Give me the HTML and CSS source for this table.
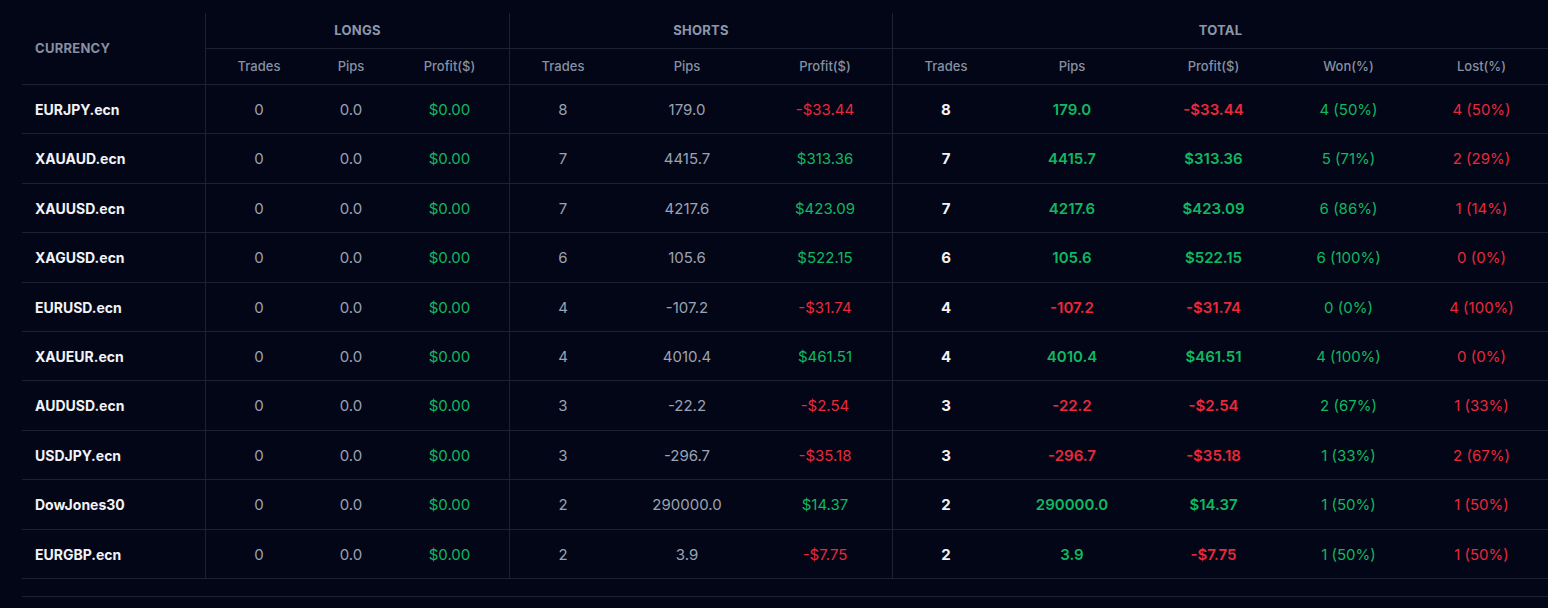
FILE: index.html
```html
<!DOCTYPE html>
<html lang="en">
<head>
<meta charset="utf-8">
<title>Currency statistics</title>
<link rel="stylesheet" href="styles.css">
</head>
<body>
<div class="wrap">
  <table class="stats">
    <colgroup>
      <col class="c-cur">
      <col class="c-106"><col class="c-78"><col class="c-120">
      <col class="c-106"><col class="c-142"><col class="c-135">
      <col class="c-106"><col class="c-146"><col class="c-137"><col class="c-133"><col class="c-133">
    </colgroup>
    <thead>
      <tr class="h1">
        <th rowspan="2" class="cur-h sep">CURRENCY</th>
        <th colspan="3" class="grp sep">LONGS</th>
        <th colspan="3" class="grp sep">SHORTS</th>
        <th colspan="5" class="grp">TOTAL</th>
      </tr>
      <tr class="h2">
        <th>Trades</th><th>Pips</th><th class="sep">Profit($)</th>
        <th>Trades</th><th>Pips</th><th class="sep">Profit($)</th>
        <th>Trades</th><th>Pips</th><th>Profit($)</th><th>Won(%)</th><th>Lost(%)</th>
      </tr>
    </thead>
    <tbody>
      <tr>
        <td class="cur sep">EURJPY.ecn</td>
        <td>0</td><td>0.0</td><td class="pos sep">$0.00</td>
        <td>8</td><td>179.0</td><td class="neg sep">-$33.44</td>
        <td class="tt">8</td><td class="pos b">179.0</td><td class="neg b">-$33.44</td><td class="pos">4 (50%)</td><td class="neg">4 (50%)</td>
      </tr>
      <tr>
        <td class="cur sep">XAUAUD.ecn</td>
        <td>0</td><td>0.0</td><td class="pos sep">$0.00</td>
        <td>7</td><td>4415.7</td><td class="pos sep">$313.36</td>
        <td class="tt">7</td><td class="pos b">4415.7</td><td class="pos b">$313.36</td><td class="pos">5 (71%)</td><td class="neg">2 (29%)</td>
      </tr>
      <tr>
        <td class="cur sep">XAUUSD.ecn</td>
        <td>0</td><td>0.0</td><td class="pos sep">$0.00</td>
        <td>7</td><td>4217.6</td><td class="pos sep">$423.09</td>
        <td class="tt">7</td><td class="pos b">4217.6</td><td class="pos b">$423.09</td><td class="pos">6 (86%)</td><td class="neg">1 (14%)</td>
      </tr>
      <tr>
        <td class="cur sep">XAGUSD.ecn</td>
        <td>0</td><td>0.0</td><td class="pos sep">$0.00</td>
        <td>6</td><td>105.6</td><td class="pos sep">$522.15</td>
        <td class="tt">6</td><td class="pos b">105.6</td><td class="pos b">$522.15</td><td class="pos">6 (100%)</td><td class="neg">0 (0%)</td>
      </tr>
      <tr>
        <td class="cur sep">EURUSD.ecn</td>
        <td>0</td><td>0.0</td><td class="pos sep">$0.00</td>
        <td>4</td><td>-107.2</td><td class="neg sep">-$31.74</td>
        <td class="tt">4</td><td class="neg b">-107.2</td><td class="neg b">-$31.74</td><td class="pos">0 (0%)</td><td class="neg">4 (100%)</td>
      </tr>
      <tr>
        <td class="cur sep">XAUEUR.ecn</td>
        <td>0</td><td>0.0</td><td class="pos sep">$0.00</td>
        <td>4</td><td>4010.4</td><td class="pos sep">$461.51</td>
        <td class="tt">4</td><td class="pos b">4010.4</td><td class="pos b">$461.51</td><td class="pos">4 (100%)</td><td class="neg">0 (0%)</td>
      </tr>
      <tr>
        <td class="cur sep">AUDUSD.ecn</td>
        <td>0</td><td>0.0</td><td class="pos sep">$0.00</td>
        <td>3</td><td>-22.2</td><td class="neg sep">-$2.54</td>
        <td class="tt">3</td><td class="neg b">-22.2</td><td class="neg b">-$2.54</td><td class="pos">2 (67%)</td><td class="neg">1 (33%)</td>
      </tr>
      <tr>
        <td class="cur sep">USDJPY.ecn</td>
        <td>0</td><td>0.0</td><td class="pos sep">$0.00</td>
        <td>3</td><td>-296.7</td><td class="neg sep">-$35.18</td>
        <td class="tt">3</td><td class="neg b">-296.7</td><td class="neg b">-$35.18</td><td class="pos">1 (33%)</td><td class="neg">2 (67%)</td>
      </tr>
      <tr>
        <td class="cur sep">DowJones30</td>
        <td>0</td><td>0.0</td><td class="pos sep">$0.00</td>
        <td>2</td><td>290000.0</td><td class="pos sep">$14.37</td>
        <td class="tt">2</td><td class="pos b">290000.0</td><td class="pos b">$14.37</td><td class="pos">1 (50%)</td><td class="neg">1 (50%)</td>
      </tr>
      <tr>
        <td class="cur sep">EURGBP.ecn</td>
        <td>0</td><td>0.0</td><td class="pos sep">$0.00</td>
        <td>2</td><td>3.9</td><td class="neg sep">-$7.75</td>
        <td class="tt">2</td><td class="pos b">3.9</td><td class="neg b">-$7.75</td><td class="pos">1 (50%)</td><td class="neg">1 (50%)</td>
      </tr>
    </tbody>
  </table>
  <div class="foot"></div>
</div>
</body>
</html>
```

FILE: styles.css
```css
html, body {
  margin: 0;
  padding: 0;
  background: #030616;
}

body {
  font-family: Inter, "Noto Sans", "Liberation Sans", sans-serif;
  color: #9aa3b4;
  -webkit-font-smoothing: antialiased;
}

.wrap {
  padding: 13px 0 0 22px;
  width: 1526px;
}

.stats {
  width: 1526px;
  table-layout: fixed;
  border-collapse: separate;
  border-spacing: 0;
}

.c-cur { width: 184px; }
.c-78 { width: 78px; }
.c-106 { width: 106px; }
.c-120 { width: 120px; }
.c-133 { width: 133px; }
.c-135 { width: 135px; }
.c-137 { width: 137px; }
.c-142 { width: 142px; }
.c-146 { width: 146px; }

.stats th,
.stats td {
  padding: 0;
  text-align: center;
  white-space: nowrap;
  border-bottom: 1px solid #1c2232;
}

.stats .sep {
  border-right: 1px solid #1c2232;
}

.h1 th {
  height: 35px;
  line-height: 35px;
}

.h2 th {
  height: 35px;
  line-height: 35px;
  font-size: 13px;
  font-weight: 500;
  color: #8690a3;
}

.grp {
  font-size: 13px;
  font-weight: 700;
  letter-spacing: 0.02em;
  color: #8e97aa;
}

.stats .cur-h {
  text-align: left;
  padding-left: 13px;
  font-size: 13px;
  font-weight: 700;
  letter-spacing: 0.02em;
  color: #8690a3;
  vertical-align: middle;
}

.stats td {
  height: 47.4px;
  padding-top: 1px;
  line-height: 47.4px;
  font-size: 15px;
  font-weight: 400;
  color: #9aa3b4;
}

.stats td.cur {
  text-align: left;
  padding-left: 13px;
  font-size: 14px;
  font-weight: 700;
  color: #f1f3f8;
}

.stats td.tt {
  font-weight: 700;
  color: #f1f3f8;
}

.stats td.pos { color: #10b862; }
.stats td.neg { color: #e9283c; }
.stats td.b { font-weight: 600; }

.foot {
  margin-top: 17px;
  border-top: 1px solid #1c2232;
}
```
